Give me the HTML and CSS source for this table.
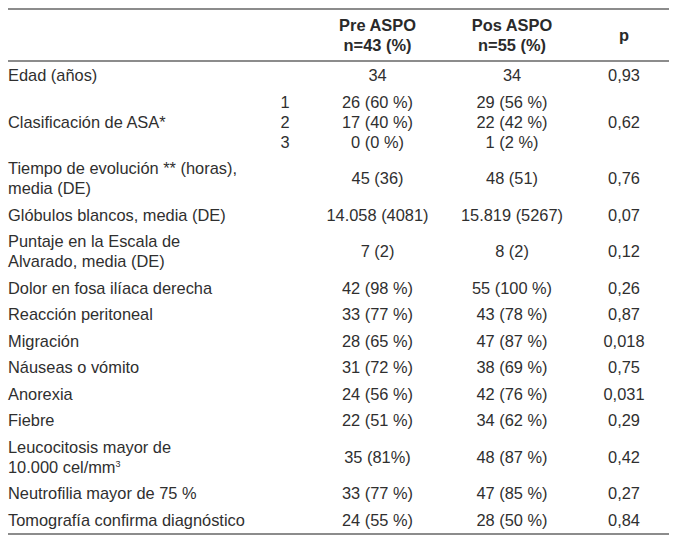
FILE: index.html
```html
<!DOCTYPE html>
<html lang="es">
<head>
<meta charset="utf-8">
<link rel="stylesheet" href="styles.css">
</head>
<body>
<div class="tbl">
  <div class="row head">
    <div class="cell label"></div>
    <div class="cell num">Pre ASPO<br>n=43 (%)</div>
    <div class="cell num">Pos ASPO<br>n=55 (%)</div>
    <div class="cell num">p</div>
  </div>
  <div class="row first">
    <div class="cell label">Edad (años)</div>
    <div class="cell num">34</div>
    <div class="cell num">34</div>
    <div class="cell num">0,93</div>
  </div>
  <div class="row">
    <div class="cell label split"><span>Clasificación de ASA*</span><span class="sub">1<br>2<br>3</span></div>
    <div class="cell num">26 (60 %)<br>17 (40 %)<br>0 (0 %)</div>
    <div class="cell num">29 (56 %)<br>22 (42 %)<br>1 (2 %)</div>
    <div class="cell num">0,62</div>
  </div>
  <div class="row">
    <div class="cell label">Tiempo de evolución ** (horas),<br>media (DE)</div>
    <div class="cell num">45 (36)</div>
    <div class="cell num">48 (51)</div>
    <div class="cell num">0,76</div>
  </div>
  <div class="row">
    <div class="cell label">Glóbulos blancos, media (DE)</div>
    <div class="cell num">14.058 (4081)</div>
    <div class="cell num">15.819 (5267)</div>
    <div class="cell num">0,07</div>
  </div>
  <div class="row">
    <div class="cell label">Puntaje en la Escala de<br>Alvarado, media (DE)</div>
    <div class="cell num">7 (2)</div>
    <div class="cell num">8 (2)</div>
    <div class="cell num">0,12</div>
  </div>
  <div class="row">
    <div class="cell label">Dolor en fosa ilíaca derecha</div>
    <div class="cell num">42 (98 %)</div>
    <div class="cell num">55 (100 %)</div>
    <div class="cell num">0,26</div>
  </div>
  <div class="row">
    <div class="cell label">Reacción peritoneal</div>
    <div class="cell num">33 (77 %)</div>
    <div class="cell num">43 (78 %)</div>
    <div class="cell num">0,87</div>
  </div>
  <div class="row">
    <div class="cell label">Migración</div>
    <div class="cell num">28 (65 %)</div>
    <div class="cell num">47 (87 %)</div>
    <div class="cell num">0,018</div>
  </div>
  <div class="row">
    <div class="cell label">Náuseas o vómito</div>
    <div class="cell num">31 (72 %)</div>
    <div class="cell num">38 (69 %)</div>
    <div class="cell num">0,75</div>
  </div>
  <div class="row">
    <div class="cell label">Anorexia</div>
    <div class="cell num">24 (56 %)</div>
    <div class="cell num">42 (76 %)</div>
    <div class="cell num">0,031</div>
  </div>
  <div class="row">
    <div class="cell label">Fiebre</div>
    <div class="cell num">22 (51 %)</div>
    <div class="cell num">34 (62 %)</div>
    <div class="cell num">0,29</div>
  </div>
  <div class="row">
    <div class="cell label">Leucocitosis mayor de<br>10.000 cel/mm<sup>3</sup></div>
    <div class="cell num">35 (81%)</div>
    <div class="cell num">48 (87 %)</div>
    <div class="cell num">0,42</div>
  </div>
  <div class="row">
    <div class="cell label">Neutrofilia mayor de 75 %</div>
    <div class="cell num">33 (77 %)</div>
    <div class="cell num">47 (85 %)</div>
    <div class="cell num">0,27</div>
  </div>
  <div class="row last">
    <div class="cell label">Tomografía confirma diagnóstico</div>
    <div class="cell num">24 (55 %)</div>
    <div class="cell num">28 (50 %)</div>
    <div class="cell num">0,84</div>
  </div>
</div>
</body>
</html>
```

FILE: styles.css
```css
html, body {
  margin: 0;
  padding: 0;
  background: #ffffff;
}
body {
  padding: 8px;
  font-family: "Liberation Sans", Arial, sans-serif;
  font-size: 16.4px;
  color: #2f2f2f;
}
.tbl {
  width: 661px;
  display: flex;
  flex-direction: column;
}
.row {
  display: grid;
  grid-template-columns: 302px 135px 134px 90px;
  align-items: center;
  line-height: 20px;
  padding: 3.25px 0;
}
.row.head {
  border-top: 2px solid #8c8c8c;
  border-bottom: 2px solid #8c8c8c;
  padding: 5px 0;
  line-height: 20px;
  font-weight: bold;
  color: #2a2a2a;
}
.row.last {
  border-bottom: 2px solid #8c8c8c;
}
.cell.label {
  text-align: left;
  white-space: nowrap;
}
.cell.num {
  text-align: center;
  white-space: nowrap;
}
.cell.split {
  display: flex;
  align-items: center;
  justify-content: space-between;
}
.sub {
  width: 10px;
  margin-right: 20px;
  text-align: center;
}
sup {
  font-size: 9px;
  line-height: 0;
  vertical-align: 6px;
}
```
